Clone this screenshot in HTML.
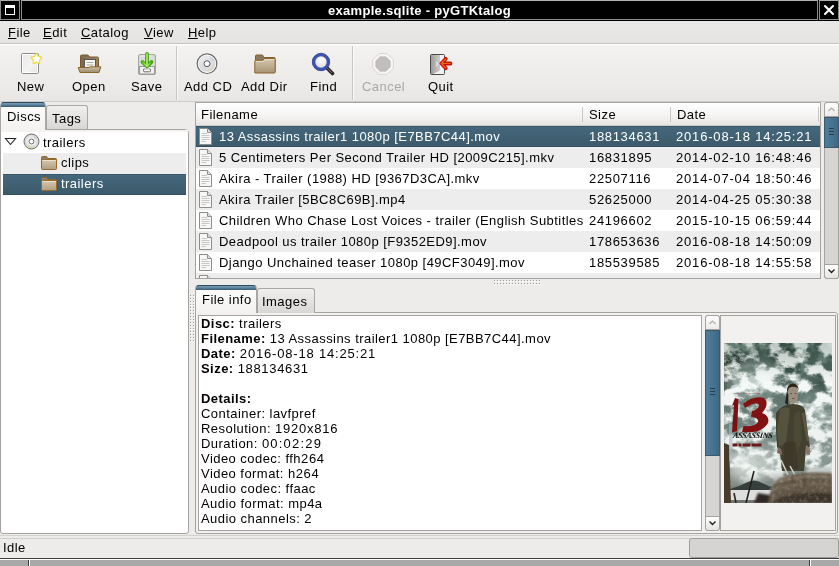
<!DOCTYPE html>
<html><head><meta charset="utf-8">
<style>
*{box-sizing:border-box;margin:0;padding:0}
html,body{width:839px;height:566px;overflow:hidden;background:#edeceb;font-family:"Liberation Sans",sans-serif;font-size:13px;color:#000}
.a{position:absolute}
.t{position:absolute;will-change:transform;white-space:pre;line-height:15px;font-size:13px;letter-spacing:0.45px}
u{text-decoration:underline;text-decoration-thickness:1px;text-underline-offset:0.5px;text-decoration-skip-ink:none}
</style></head><body>
<!-- title bar -->
<div class="a" style="left:0;top:0;width:839px;height:21px;background:#000"></div>
<div class="a" style="left:0;top:0;width:20px;height:20px;border:1px solid #8a8a8a;border-top-color:#b0b0b0;background:#000"></div>
<div class="a" style="left:5px;top:5px;width:10px;height:10px;border:1px solid #fff;border-top-width:3px"></div>
<div class="a" style="left:21px;top:0;width:797px;height:20px;border:1px solid #8a8a8a;border-top-color:#b0b0b0;background:#000"></div>
<div class="a" style="left:819px;top:0;width:20px;height:20px;border:1px solid #8a8a8a;border-top-color:#b0b0b0;background:#000"></div>
<svg class="a" style="left:823px;top:4px" width="12" height="12"><path d="M2 2L10 10M10 2L2 10" stroke="#fff" stroke-width="2.1" stroke-linecap="round"/></svg>
<div class="t" style="left:328px;top:3px;color:#fff;font-weight:bold;font-size:13px;letter-spacing:0.3px">example.sqlite - pyGTKtalog</div>

<!-- menubar -->
<div class="a" style="left:0;top:21px;width:839px;height:23px;background:linear-gradient(#e9e8e6,#e5e4e2);border-bottom:1px solid #c6c4c1"></div>
<div class="t" style="left:8px;top:25px"><u>F</u>ile</div>
<div class="t" style="left:43px;top:25px"><u>E</u>dit</div>
<div class="t" style="left:81px;top:25px"><u>C</u>atalog</div>
<div class="t" style="left:144px;top:25px"><u>V</u>iew</div>
<div class="t" style="left:188px;top:25px"><u>H</u>elp</div>

<!-- toolbar -->
<div class="a" style="left:0;top:44px;width:839px;height:58px;background:linear-gradient(#fdfdfd 0px,#fdfdfd 1px,#f3f2f1 2px,#e8e7e5);border-bottom:1px solid #cdcbc8"></div>
<div class="a" style="left:176px;top:46px;width:1px;height:54px;background:#c8c6c3;box-shadow:1px 0 0 #fafafa"></div>
<div class="a" style="left:352px;top:46px;width:1px;height:54px;background:#c8c6c3;box-shadow:1px 0 0 #fafafa"></div>
<div class="t" style="left:17px;top:79px">New</div>
<div class="t" style="left:72px;top:79px">Open</div>
<div class="t" style="left:131px;top:79px">Save</div>
<div class="t" style="left:184px;top:79px">Add CD</div>
<div class="t" style="left:241px;top:79px">Add Dir</div>
<div class="t" style="left:310px;top:79px">Find</div>
<div class="t" style="left:362px;top:79px;color:#a9a8a6">Cancel</div>
<div class="t" style="left:428px;top:79px">Quit</div>

<!-- toolbar icons -->
<svg class="a" style="left:18px;top:51px" width="24" height="24">
<defs><linearGradient id="pg" x1="0" y1="0" x2="1" y2="1"><stop offset="0" stop-color="#e8e8e6"/><stop offset="0.6" stop-color="#f4f4f3"/><stop offset="1" stop-color="#e2e2e0"/></linearGradient></defs>
<rect x="3.5" y="2.5" width="17" height="20" rx="1.2" fill="url(#pg)" stroke="#8d8d8b"/>
<rect x="4.5" y="3.5" width="15" height="18" fill="none" stroke="#fff" stroke-width="0.8"/>
<path d="M18.4 3.0L20.0 5.7L23.2 6.5L21.1 8.9L21.3 12.0L18.4 10.8L15.5 12.0L15.7 8.9L13.6 6.5L16.8 5.7Z" fill="#fffef0" stroke="#e8d420" stroke-width="2" stroke-linejoin="round"/><path d="M18.4 3.0L20.0 5.7L23.2 6.5L21.1 8.9L21.3 12.0L18.4 10.8L15.5 12.0L15.7 8.9L13.6 6.5L16.8 5.7Z" fill="#fff" stroke="#f4e860" stroke-width="0.6" stroke-linejoin="round"/>
</svg>
<svg class="a" style="left:77px;top:50px" width="25" height="25">
<defs><linearGradient id="ob" x1="0" y1="0" x2="1" y2="0"><stop offset="0" stop-color="#7a664c"/><stop offset="1" stop-color="#9c8766"/></linearGradient>
<linearGradient id="of" x1="0" y1="0" x2="0" y2="1"><stop offset="0" stop-color="#cfc2a8"/><stop offset="1" stop-color="#9d8a6a"/></linearGradient></defs>
<path d="M3.5 22.5V6.2Q3.5 5 4.7 5H11L12.5 7H20.3Q21.5 7 21.5 8.2V22.5Z" fill="url(#ob)" stroke="#7a5a2c"/>
<rect x="7.5" y="9.5" width="11" height="8" fill="#f8f8f6" stroke="#555"/>
<path d="M9.5 12.5H16.5M9.5 15H16.5" stroke="#a8a8a0" stroke-width="1.1"/>
<path d="M1.2 17.5H12L13 16.8H23.8L22 22.5H3Z" fill="url(#of)" stroke="#8a6428" stroke-linejoin="round"/>
</svg>
<svg class="a" style="left:135px;top:51px" width="24" height="24">
<defs><linearGradient id="cab" x1="0" y1="0" x2="1" y2="0"><stop offset="0" stop-color="#d8d8d6"/><stop offset="0.5" stop-color="#f2f2f1"/><stop offset="1" stop-color="#cfcfcd"/></linearGradient>
<linearGradient id="grn" x1="0" y1="0" x2="1" y2="0"><stop offset="0" stop-color="#5fc21f"/><stop offset="0.5" stop-color="#a8ee6a"/><stop offset="1" stop-color="#4caa14"/></linearGradient></defs>
<rect x="3.5" y="3.5" width="17" height="20" rx="1.5" fill="url(#cab)" stroke="#a4a4a2"/>
<rect x="5" y="6" width="14" height="8" fill="#dcdcda"/>
<rect x="4.5" y="15.5" width="15" height="7.5" fill="#f0f0ee" stroke="#9a9a98"/>
<rect x="8.5" y="17.8" width="7" height="3" rx="1" fill="#fafafa" stroke="#5a5a5a" stroke-width="0.9"/><path d="M9.5 17.8H14.5" stroke="#e0e0de" stroke-width="1"/>
<path d="M12 3V14M7.5 11L12 15.3L16.5 11" fill="none" stroke="#45a012" stroke-width="3.8" stroke-linecap="round" stroke-linejoin="round"/>
<path d="M12 3V14M7.5 11L12 15.3L16.5 11" fill="none" stroke="url(#grn)" stroke-width="1.8" stroke-linecap="round" stroke-linejoin="round"/>
</svg>
<svg class="a" style="left:195px;top:52px" width="24" height="24">
<defs><radialGradient id="cd24" cx="0.45" cy="0.4" r="0.6"><stop offset="0" stop-color="#fff"/><stop offset="0.5" stop-color="#e2e2e4"/><stop offset="0.8" stop-color="#d4d4dc"/><stop offset="1" stop-color="#eee"/></radialGradient></defs>
<circle cx="12" cy="11.7" r="9.8" fill="url(#cd24)" stroke="#6a6a6a" stroke-width="1.2"/>
<circle cx="12" cy="11.7" r="8.6" fill="none" stroke="#fafafa" stroke-width="1"/><path d="M13 18.5A7 7 0 0 0 18.8 13" stroke="#d8dca0" stroke-width="2.5" fill="none" opacity="0.4"/><path d="M18.5 9A7 7 0 0 0 15 5.5" stroke="#b8b8e8" stroke-width="2.5" fill="none" opacity="0.35"/><circle cx="12" cy="11.7" r="5" fill="none" stroke="#dcdce0" stroke-width="1.5"/>
<circle cx="12" cy="11.7" r="3" fill="#f4f4f4" stroke="#555" stroke-width="1"/>
<circle cx="12" cy="11.7" r="1.5" fill="#fff"/>
</svg>
<svg class="a" style="left:253px;top:52px" width="24" height="24">
<defs><linearGradient id="df" x1="0" y1="0" x2="0" y2="1"><stop offset="0" stop-color="#d3c6ad"/><stop offset="1" stop-color="#a89474"/></linearGradient></defs>
<path d="M2.5 20V4Q2.5 3 3.5 3H9.5L11 5.5H21Q22 5.5 22 6.5V20Z" fill="#8d7a5e" stroke="#84602a"/>
<path d="M1.8 20.5V9.2Q1.8 8.3 2.8 8.3H10L11.5 6.5H21.2Q22.2 6.5 22.2 7.5V20.2Q22.2 21 21.2 21H2.8Q1.8 21 1.8 20Z" fill="url(#df)" stroke="#8a6428"/>
<path d="M3 9.5H10.5L12 7.6H21" stroke="#eee4d0" stroke-width="0.9" fill="none"/>
</svg>
<svg class="a" style="left:310px;top:51px" width="25" height="25">
<defs><radialGradient id="lens" cx="0.55" cy="0.35" r="0.6"><stop offset="0" stop-color="#fff"/><stop offset="1" stop-color="#dcdcdc"/></radialGradient></defs>
<path d="M17 17L22.5 22.5" stroke="#2a2a2a" stroke-width="3.6" stroke-linecap="round"/>
<path d="M17.5 17.5L21.5 21.5" stroke="#777" stroke-width="1" stroke-linecap="round"/>
<circle cx="11" cy="11" r="7.2" fill="url(#lens)" stroke="#3d55b0" stroke-width="3"/>
<circle cx="11" cy="11" r="8.7" fill="none" stroke="#2a3a8a" stroke-width="0.8"/>
</svg>
<svg class="a" style="left:371px;top:52px" width="24" height="24">
<path d="M8 1.6H16L22.4 8V16L16 22.4H8L1.6 16V8Z" fill="#f6f6f5" stroke="#d8d6d4" stroke-width="1"/>
<path d="M9 4.8H15L19.2 9V15L15 19.2H9L4.8 15V9Z" fill="#c1bdbc" stroke="#b3afae" stroke-width="0.6"/>
</svg>
<svg class="a" style="left:428px;top:52px" width="25" height="24">
<defs><linearGradient id="door" x1="0" y1="0" x2="1" y2="0"><stop offset="0" stop-color="#9a9a9a"/><stop offset="0.6" stop-color="#c8c8c8"/><stop offset="1" stop-color="#d8d8d8"/></linearGradient></defs>
<rect x="2.5" y="2.5" width="14" height="20" rx="1" fill="url(#door)" stroke="#4a4a4a"/>
<path d="M12 3H16V22H5L12 18.5Z" fill="#f2f2f2"/>
<path d="M8 10L10 12L8 14" stroke="#e8e8e8" stroke-width="1.2" fill="none"/>
<path d="M13.5 11.5H22.5M17.8 6.8L13.3 11.5L17.8 16.2" fill="none" stroke="#cc1000" stroke-width="3.8" stroke-linecap="round" stroke-linejoin="round"/>
<path d="M13.5 11.5H22.3M17.8 6.8L13.3 11.5L17.8 16.2" fill="none" stroke="#f26a18" stroke-width="1.2" stroke-linecap="round" stroke-linejoin="round"/>
</svg>
<!-- left notebook -->
<div class="a" style="left:0;top:129px;width:189px;height:405px;border:1px solid #a5a3a0;border-radius:0 4px 3px 3px;background:#fff;box-shadow:inset 1px 0 0 #fff"></div>
<div class="a" style="left:1px;top:130px;width:187px;height:2px;background:#f4f3f2"></div>
<div class="a" style="left:46px;top:105px;width:42px;height:24px;border:1px solid #a9a7a4;border-bottom:none;border-radius:3px 3px 0 0;background:linear-gradient(#f0efee,#d9d7d5)"></div>
<div class="a" style="left:0;top:102px;width:46px;height:28px;border:1px solid #a9a7a4;border-bottom:none;border-top-color:#31495a;border-radius:4px 4px 0 0;background:linear-gradient(#7aa0b8 0px,#5a819b 2px,#466b84 3px,#3a5a6d 4px,#fbfbfa 4px,#f3f2f1 100%)"></div>
<div class="t" style="left:7px;top:109px">Discs</div>
<div class="t" style="left:52px;top:111px">Tags</div>

<!-- list -->
<div class="a" style="left:195px;top:102px;width:626px;height:177px;border:1px solid #a5a3a0;background:#fff"></div>

<!-- notebook bottom -->
<div class="a" style="left:195px;top:312px;width:643px;height:222px;border:1px solid #a5a3a0;border-radius:0 3px 3px 3px;background:#f2f1f0"></div>
<div class="a" style="left:257px;top:288px;width:58px;height:25px;border:1px solid #a9a7a4;border-bottom:none;border-radius:3px 3px 0 0;background:linear-gradient(#f0efee,#d9d7d5)"></div>
<div class="a" style="left:195px;top:285px;width:62px;height:28px;border:1px solid #a9a7a4;border-bottom:none;border-top-color:#31495a;border-radius:4px 4px 0 0;background:linear-gradient(#7aa0b8 0px,#5a819b 2px,#466b84 3px,#3a5a6d 4px,#fbfbfa 4px,#f3f2f1 100%)"></div>
<div class="t" style="left:202px;top:292px">File info</div>
<div class="t" style="left:262px;top:294px">Images</div>

<svg width="0" height="0" style="position:absolute"><defs>
<g id="fileic"><path d="M0.5 0.5H8.5L12.5 4.5V16.5H0.5Z" fill="#f7f7f6" stroke="#8e8d8b"/><path d="M8.5 0.5V4.5H12.5" fill="#dedddb" stroke="#8e8d8b"/>
<path d="M2.5 5.5H8M2.5 7.5H10.5M2.5 9.5H10.5M2.5 11.5H10.5M2.5 13.5H7" stroke="#c8c7c5" stroke-width="1"/></g>
</defs></svg>
<svg width="0" height="0" style="position:absolute"><defs>
<radialGradient id="cdg" cx="0.5" cy="0.5" r="0.5"><stop offset="0.2" stop-color="#fff"/><stop offset="0.6" stop-color="#e6e6e6"/><stop offset="1" stop-color="#d2d2d2"/></radialGradient>
<linearGradient id="foldg" x1="0" y1="0" x2="0" y2="1"><stop offset="0" stop-color="#d6c8ae"/><stop offset="1" stop-color="#b29e80"/></linearGradient>
<g id="cdic16"><circle cx="8.5" cy="8.5" r="7.5" fill="url(#cdg)" stroke="#6e6e6e" stroke-width="1"/><path d="M5 12.5A5.5 5.5 0 0 0 11 13.8" stroke="#c8d890" stroke-width="2" fill="none" opacity="0.6"/><path d="M12.5 6A5 5 0 0 0 11 4" stroke="#b8b8e0" stroke-width="1.5" fill="none" opacity="0.5"/><circle cx="8.5" cy="8.5" r="2.4" fill="#fff" stroke="#707070" stroke-width="1"/></g>
<g id="foldic16"><path d="M0.5 13V2.5Q0.5 1.5 1.5 1.5H5.5L7 3.5H14.5Q15.5 3.5 15.5 4.5V13Z" fill="#8e7e6a" stroke="#8f6428"/><path d="M0.5 13.5V5.5Q0.5 4.5 1.5 4.5H14.5Q15.5 4.5 15.5 5.5V13.5Q15.5 14.5 14.5 14.5H1.5Q0.5 14.5 0.5 13.5Z" fill="url(#foldg)" stroke="#946a2e"/><path d="M1.5 5.5H14.5" stroke="#ece2cc" stroke-width="1"/></g>
</defs></svg>
<!-- tree -->
<div class="a" style="left:3px;top:153px;width:183px;height:21px;background:#ededed"></div>
<div class="a" style="left:3px;top:174px;width:183px;height:21px;background:linear-gradient(#37586a 0px,#37586a 1px,#45677b 1px,#3c5b6c 20px,#34505f 20px)"></div>
<svg class="a" style="left:4px;top:137px" width="13" height="9"><path d="M1.5 1.5H11.5L6.5 7.5Z" fill="none" stroke="#222" stroke-width="1.1" stroke-linejoin="miter"/></svg>
<svg class="a" style="left:23px;top:133px" width="17" height="17"><use href="#cdic16"/></svg>
<div class="t" style="left:43px;top:135px">trailers</div>
<svg class="a" style="left:41px;top:155px" width="17" height="17"><use href="#foldic16"/></svg>
<div class="t" style="left:61px;top:155px">clips</div>
<svg class="a" style="left:41px;top:176px" width="17" height="17"><use href="#foldic16"/></svg>
<div class="t" style="left:61px;top:176px;color:#fff">trailers</div>
<!-- list content -->
<div class="a" style="left:196px;top:103px;width:624px;height:175px;overflow:hidden">
<div class="a" style="left:0;top:0;width:624px;height:23px;background:linear-gradient(#ffffff,#f4f3f2 60%,#e6e5e3);border-bottom:1px solid #d0cecb"></div>
<div class="a" style="left:386px;top:4px;width:1px;height:15px;background:#c9c7c4"></div>
<div class="a" style="left:474px;top:4px;width:1px;height:15px;background:#c9c7c4"></div>
<div class="a" style="left:622px;top:4px;width:1px;height:15px;background:#c9c7c4"></div>
<div class="t" style="left:5px;top:4px">Filename</div>
<div class="t" style="left:393px;top:4px">Size</div>
<div class="t" style="left:481px;top:4px">Date</div>
<div class="a" style="left:0;top:23px;width:624px;height:21px;background:linear-gradient(#37586a 0px,#37586a 1px,#45677b 1px,#3c5b6c 20px,#34505f 20px);color:#fff">
<svg class="a" style="left:3px;top:2px" width="13" height="17"><use href="#fileic"/></svg>
<div class="t" style="left:23px;top:3px;width:364px;overflow:hidden">13 Assassins trailer1 1080p [E7BB7C44].mov</div>
<div class="t" style="left:393px;top:3px;letter-spacing:0.67px">188134631</div>
<div class="t" style="left:480px;top:3px;letter-spacing:0.82px">2016-08-18 14:25:21</div>
</div>
<div class="a" style="left:0;top:44px;width:624px;height:21px;background:#ededed;color:#000">
<svg class="a" style="left:3px;top:2px" width="13" height="17"><use href="#fileic"/></svg>
<div class="t" style="left:23px;top:3px;width:364px;overflow:hidden">5 Centimeters Per Second Trailer HD [2009C215].mkv</div>
<div class="t" style="left:393px;top:3px;letter-spacing:0.67px">16831895</div>
<div class="t" style="left:480px;top:3px;letter-spacing:0.82px">2014-02-10 16:48:46</div>
</div>
<div class="a" style="left:0;top:65px;width:624px;height:21px;background:#fff;color:#000">
<svg class="a" style="left:3px;top:2px" width="13" height="17"><use href="#fileic"/></svg>
<div class="t" style="left:23px;top:3px;width:364px;overflow:hidden">Akira - Trailer (1988) HD [9367D3CA].mkv</div>
<div class="t" style="left:393px;top:3px;letter-spacing:0.67px">22507116</div>
<div class="t" style="left:480px;top:3px;letter-spacing:0.82px">2014-07-04 18:50:46</div>
</div>
<div class="a" style="left:0;top:86px;width:624px;height:21px;background:#ededed;color:#000">
<svg class="a" style="left:3px;top:2px" width="13" height="17"><use href="#fileic"/></svg>
<div class="t" style="left:23px;top:3px;width:364px;overflow:hidden">Akira Trailer [5BC8C69B].mp4</div>
<div class="t" style="left:393px;top:3px;letter-spacing:0.67px">52625000</div>
<div class="t" style="left:480px;top:3px;letter-spacing:0.82px">2014-04-25 05:30:38</div>
</div>
<div class="a" style="left:0;top:107px;width:624px;height:21px;background:#fff;color:#000">
<svg class="a" style="left:3px;top:2px" width="13" height="17"><use href="#fileic"/></svg>
<div class="t" style="left:23px;top:3px;width:364px;overflow:hidden">Children Who Chase Lost Voices - trailer (English Subtitles)</div>
<div class="t" style="left:393px;top:3px;letter-spacing:0.67px">24196602</div>
<div class="t" style="left:480px;top:3px;letter-spacing:0.82px">2015-10-15 06:59:44</div>
</div>
<div class="a" style="left:0;top:128px;width:624px;height:21px;background:#ededed;color:#000">
<svg class="a" style="left:3px;top:2px" width="13" height="17"><use href="#fileic"/></svg>
<div class="t" style="left:23px;top:3px;width:364px;overflow:hidden">Deadpool us trailer 1080p [F9352ED9].mov</div>
<div class="t" style="left:393px;top:3px;letter-spacing:0.67px">178653636</div>
<div class="t" style="left:480px;top:3px;letter-spacing:0.82px">2016-08-18 14:50:09</div>
</div>
<div class="a" style="left:0;top:149px;width:624px;height:21px;background:#fff;color:#000">
<svg class="a" style="left:3px;top:2px" width="13" height="17"><use href="#fileic"/></svg>
<div class="t" style="left:23px;top:3px;width:364px;overflow:hidden">Django Unchained teaser 1080p [49CF3049].mov</div>
<div class="t" style="left:393px;top:3px;letter-spacing:0.67px">185539585</div>
<div class="t" style="left:480px;top:3px;letter-spacing:0.82px">2016-08-18 14:55:58</div>
</div>
<div class="a" style="left:0;top:170px;width:624px;height:21px;background:#ededed;color:#000">
<svg class="a" style="left:3px;top:2px" width="13" height="17"><use href="#fileic"/></svg>
<div class="t" style="left:23px;top:3px;width:364px;overflow:hidden">Dredd trailer</div>
<div class="t" style="left:393px;top:3px;letter-spacing:0.67px">1000</div>
<div class="t" style="left:480px;top:3px;letter-spacing:0.82px">2016-08-18 14:55:58</div>
</div>
</div>
<!-- list scrollbar -->
<div class="a" style="left:824px;top:102px;width:15px;height:177px;background:#d6d5d4;border:1px solid #a5a3a0;border-radius:3px"></div>
<div class="a" style="left:824px;top:102px;width:15px;height:15px;background:linear-gradient(#fdfdfd,#ecebea);border:1px solid #a5a3a0;border-radius:3px 3px 0 0"></div>
<svg class="a" style="left:827px;top:105px" width="9" height="8"><path d="M1.5 6L4.5 3L7.5 6" fill="none" stroke="#adabaa" stroke-width="1.1"/></svg>
<div class="a" style="left:824px;top:117px;width:15px;height:31px;background:linear-gradient(90deg,#4e7c9a,#45728f 60%,#3e6884);border:1px solid #3a596c"></div>
<div class="a" style="left:829px;top:128px;width:5px;height:1px;background:#2a3e4c;box-shadow:0 3px 0 #2a3e4c,0 6px 0 #2a3e4c"></div>
<div class="a" style="left:824px;top:264px;width:15px;height:15px;background:linear-gradient(#fdfdfd,#e6e5e4);border:1px solid #a5a3a0;border-radius:0 0 3px 3px"></div>
<svg class="a" style="left:827px;top:267px" width="9" height="8"><path d="M1.5 2.5L4.5 5.5L7.5 2.5" fill="none" stroke="#222" stroke-width="1.4"/></svg>
<!-- paned handle -->
<svg class="a" style="left:190px;top:295px" width="6" height="48"><rect x="0" y="0" width="1" height="1" fill="#9e9c99"/><rect x="1" y="1" width="1" height="1" fill="#fff"/><rect x="3" y="0" width="1" height="1" fill="#9e9c99"/><rect x="4" y="1" width="1" height="1" fill="#fff"/><rect x="0" y="3" width="1" height="1" fill="#9e9c99"/><rect x="1" y="4" width="1" height="1" fill="#fff"/><rect x="3" y="3" width="1" height="1" fill="#9e9c99"/><rect x="4" y="4" width="1" height="1" fill="#fff"/><rect x="0" y="6" width="1" height="1" fill="#9e9c99"/><rect x="1" y="7" width="1" height="1" fill="#fff"/><rect x="3" y="6" width="1" height="1" fill="#9e9c99"/><rect x="4" y="7" width="1" height="1" fill="#fff"/><rect x="0" y="9" width="1" height="1" fill="#9e9c99"/><rect x="1" y="10" width="1" height="1" fill="#fff"/><rect x="3" y="9" width="1" height="1" fill="#9e9c99"/><rect x="4" y="10" width="1" height="1" fill="#fff"/><rect x="0" y="12" width="1" height="1" fill="#9e9c99"/><rect x="1" y="13" width="1" height="1" fill="#fff"/><rect x="3" y="12" width="1" height="1" fill="#9e9c99"/><rect x="4" y="13" width="1" height="1" fill="#fff"/><rect x="0" y="15" width="1" height="1" fill="#9e9c99"/><rect x="1" y="16" width="1" height="1" fill="#fff"/><rect x="3" y="15" width="1" height="1" fill="#9e9c99"/><rect x="4" y="16" width="1" height="1" fill="#fff"/><rect x="0" y="18" width="1" height="1" fill="#9e9c99"/><rect x="1" y="19" width="1" height="1" fill="#fff"/><rect x="3" y="18" width="1" height="1" fill="#9e9c99"/><rect x="4" y="19" width="1" height="1" fill="#fff"/><rect x="0" y="21" width="1" height="1" fill="#9e9c99"/><rect x="1" y="22" width="1" height="1" fill="#fff"/><rect x="3" y="21" width="1" height="1" fill="#9e9c99"/><rect x="4" y="22" width="1" height="1" fill="#fff"/><rect x="0" y="24" width="1" height="1" fill="#9e9c99"/><rect x="1" y="25" width="1" height="1" fill="#fff"/><rect x="3" y="24" width="1" height="1" fill="#9e9c99"/><rect x="4" y="25" width="1" height="1" fill="#fff"/><rect x="0" y="27" width="1" height="1" fill="#9e9c99"/><rect x="1" y="28" width="1" height="1" fill="#fff"/><rect x="3" y="27" width="1" height="1" fill="#9e9c99"/><rect x="4" y="28" width="1" height="1" fill="#fff"/><rect x="0" y="30" width="1" height="1" fill="#9e9c99"/><rect x="1" y="31" width="1" height="1" fill="#fff"/><rect x="3" y="30" width="1" height="1" fill="#9e9c99"/><rect x="4" y="31" width="1" height="1" fill="#fff"/><rect x="0" y="33" width="1" height="1" fill="#9e9c99"/><rect x="1" y="34" width="1" height="1" fill="#fff"/><rect x="3" y="33" width="1" height="1" fill="#9e9c99"/><rect x="4" y="34" width="1" height="1" fill="#fff"/><rect x="0" y="36" width="1" height="1" fill="#9e9c99"/><rect x="1" y="37" width="1" height="1" fill="#fff"/><rect x="3" y="36" width="1" height="1" fill="#9e9c99"/><rect x="4" y="37" width="1" height="1" fill="#fff"/><rect x="0" y="39" width="1" height="1" fill="#9e9c99"/><rect x="1" y="40" width="1" height="1" fill="#fff"/><rect x="3" y="39" width="1" height="1" fill="#9e9c99"/><rect x="4" y="40" width="1" height="1" fill="#fff"/><rect x="0" y="42" width="1" height="1" fill="#9e9c99"/><rect x="1" y="43" width="1" height="1" fill="#fff"/><rect x="3" y="42" width="1" height="1" fill="#9e9c99"/><rect x="4" y="43" width="1" height="1" fill="#fff"/><rect x="0" y="45" width="1" height="1" fill="#9e9c99"/><rect x="1" y="46" width="1" height="1" fill="#fff"/><rect x="3" y="45" width="1" height="1" fill="#9e9c99"/><rect x="4" y="46" width="1" height="1" fill="#fff"/></svg>
<svg class="a" style="left:494px;top:280px" width="48" height="6"><rect x="0" y="0" width="1" height="1" fill="#9e9c99"/><rect x="1" y="1" width="1" height="1" fill="#fff"/><rect x="3" y="0" width="1" height="1" fill="#9e9c99"/><rect x="4" y="1" width="1" height="1" fill="#fff"/><rect x="6" y="0" width="1" height="1" fill="#9e9c99"/><rect x="7" y="1" width="1" height="1" fill="#fff"/><rect x="9" y="0" width="1" height="1" fill="#9e9c99"/><rect x="10" y="1" width="1" height="1" fill="#fff"/><rect x="12" y="0" width="1" height="1" fill="#9e9c99"/><rect x="13" y="1" width="1" height="1" fill="#fff"/><rect x="15" y="0" width="1" height="1" fill="#9e9c99"/><rect x="16" y="1" width="1" height="1" fill="#fff"/><rect x="18" y="0" width="1" height="1" fill="#9e9c99"/><rect x="19" y="1" width="1" height="1" fill="#fff"/><rect x="21" y="0" width="1" height="1" fill="#9e9c99"/><rect x="22" y="1" width="1" height="1" fill="#fff"/><rect x="24" y="0" width="1" height="1" fill="#9e9c99"/><rect x="25" y="1" width="1" height="1" fill="#fff"/><rect x="27" y="0" width="1" height="1" fill="#9e9c99"/><rect x="28" y="1" width="1" height="1" fill="#fff"/><rect x="30" y="0" width="1" height="1" fill="#9e9c99"/><rect x="31" y="1" width="1" height="1" fill="#fff"/><rect x="33" y="0" width="1" height="1" fill="#9e9c99"/><rect x="34" y="1" width="1" height="1" fill="#fff"/><rect x="36" y="0" width="1" height="1" fill="#9e9c99"/><rect x="37" y="1" width="1" height="1" fill="#fff"/><rect x="39" y="0" width="1" height="1" fill="#9e9c99"/><rect x="40" y="1" width="1" height="1" fill="#fff"/><rect x="42" y="0" width="1" height="1" fill="#9e9c99"/><rect x="43" y="1" width="1" height="1" fill="#fff"/><rect x="45" y="0" width="1" height="1" fill="#9e9c99"/><rect x="46" y="1" width="1" height="1" fill="#fff"/><rect x="0" y="3" width="1" height="1" fill="#9e9c99"/><rect x="1" y="4" width="1" height="1" fill="#fff"/><rect x="3" y="3" width="1" height="1" fill="#9e9c99"/><rect x="4" y="4" width="1" height="1" fill="#fff"/><rect x="6" y="3" width="1" height="1" fill="#9e9c99"/><rect x="7" y="4" width="1" height="1" fill="#fff"/><rect x="9" y="3" width="1" height="1" fill="#9e9c99"/><rect x="10" y="4" width="1" height="1" fill="#fff"/><rect x="12" y="3" width="1" height="1" fill="#9e9c99"/><rect x="13" y="4" width="1" height="1" fill="#fff"/><rect x="15" y="3" width="1" height="1" fill="#9e9c99"/><rect x="16" y="4" width="1" height="1" fill="#fff"/><rect x="18" y="3" width="1" height="1" fill="#9e9c99"/><rect x="19" y="4" width="1" height="1" fill="#fff"/><rect x="21" y="3" width="1" height="1" fill="#9e9c99"/><rect x="22" y="4" width="1" height="1" fill="#fff"/><rect x="24" y="3" width="1" height="1" fill="#9e9c99"/><rect x="25" y="4" width="1" height="1" fill="#fff"/><rect x="27" y="3" width="1" height="1" fill="#9e9c99"/><rect x="28" y="4" width="1" height="1" fill="#fff"/><rect x="30" y="3" width="1" height="1" fill="#9e9c99"/><rect x="31" y="4" width="1" height="1" fill="#fff"/><rect x="33" y="3" width="1" height="1" fill="#9e9c99"/><rect x="34" y="4" width="1" height="1" fill="#fff"/><rect x="36" y="3" width="1" height="1" fill="#9e9c99"/><rect x="37" y="4" width="1" height="1" fill="#fff"/><rect x="39" y="3" width="1" height="1" fill="#9e9c99"/><rect x="40" y="4" width="1" height="1" fill="#fff"/><rect x="42" y="3" width="1" height="1" fill="#9e9c99"/><rect x="43" y="4" width="1" height="1" fill="#fff"/><rect x="45" y="3" width="1" height="1" fill="#9e9c99"/><rect x="46" y="4" width="1" height="1" fill="#fff"/></svg>

<!-- text view -->
<div class="a" style="left:198px;top:315px;width:504px;height:216px;border:1px solid #a5a3a0;background:#fff"></div>
<div class="t" style="left:201px;top:316px"><b>Disc:</b> trailers</div>
<div class="t" style="left:201px;top:331px"><b>Filename:</b> 13 Assassins trailer1 1080p [E7BB7C44].mov</div>
<div class="t" style="left:201px;top:346px"><b>Date:</b> <span style="letter-spacing:0.82px">2016-08-18 14:25:21</span></div>
<div class="t" style="left:201px;top:361px"><b>Size:</b> <span style="letter-spacing:0.67px">188134631</span></div>
<div class="t" style="left:201px;top:391px"><b>Details:</b></div>
<div class="t" style="left:201px;top:406px">Container: lavfpref</div>
<div class="t" style="left:201px;top:421px">Resolution: <span style="letter-spacing:0.75px">1920x816</span></div>
<div class="t" style="left:201px;top:436px">Duration: <span style="letter-spacing:1.2px">00:02:29</span></div>
<div class="t" style="left:201px;top:451px">Video codec: ffh<span style="letter-spacing:0.7px">264</span></div>
<div class="t" style="left:201px;top:466px">Video format: h<span style="letter-spacing:0.7px">264</span></div>
<div class="t" style="left:201px;top:481px">Audio codec: ffaac</div>
<div class="t" style="left:201px;top:496px">Audio format: mp4a</div>
<div class="t" style="left:201px;top:511px">Audio channels: 2</div>
<!-- text scrollbar -->
<div class="a" style="left:705px;top:315px;width:15px;height:216px;background:#d6d5d4;border:1px solid #a5a3a0;border-radius:3px"></div>
<div class="a" style="left:705px;top:315px;width:15px;height:15px;background:linear-gradient(#fdfdfd,#ecebea);border:1px solid #a5a3a0;border-radius:3px 3px 0 0"></div>
<svg class="a" style="left:708px;top:318px" width="9" height="8"><path d="M1.5 6L4.5 3L7.5 6" fill="none" stroke="#adabaa" stroke-width="1.1"/></svg>
<div class="a" style="left:705px;top:330px;width:15px;height:126px;background:linear-gradient(90deg,#4e7c9a,#45728f 60%,#3e6884);border:1px solid #3a596c"></div>
<div class="a" style="left:710px;top:388px;width:5px;height:1px;background:#2a3e4c;box-shadow:0 3px 0 #2a3e4c,0 6px 0 #2a3e4c"></div>
<div class="a" style="left:705px;top:516px;width:15px;height:15px;background:linear-gradient(#fdfdfd,#e6e5e4);border:1px solid #a5a3a0;border-radius:0 0 3px 3px"></div>
<svg class="a" style="left:708px;top:519px" width="9" height="8"><path d="M1.5 2.5L4.5 5.5L7.5 2.5" fill="none" stroke="#222" stroke-width="1.4"/></svg>
<!-- image frame -->
<div class="a" style="left:720px;top:315px;width:116px;height:216px;border:1px solid #a5a3a0;background:#f2f1f0"></div>
<!--POSTER-->
<svg class="a" style="left:724px;top:343px" width="108" height="160" viewBox="0 0 108 160">
<defs>
<filter id="cloud" x="0" y="0" width="108" height="160" filterUnits="userSpaceOnUse"><feTurbulence type="fractalNoise" baseFrequency="0.06 0.08" numOctaves="5" seed="21"/><feColorMatrix type="matrix" values="0 0 0 0 0.9  0 0 0 0 0.94  0 0 0 0 0.92  5.5 0 0 0 -2.3"/><feGaussianBlur stdDeviation="0.35"/><feComposite in2="SourceGraphic" operator="in"/></filter>
<filter id="cloudd" x="0" y="0" width="108" height="160" filterUnits="userSpaceOnUse"><feTurbulence type="fractalNoise" baseFrequency="0.07 0.09" numOctaves="4" seed="5"/><feColorMatrix type="matrix" values="0 0 0 0 0.13  0 0 0 0 0.2  0 0 0 0 0.17  5 0 0 0 -2.4"/><feGaussianBlur stdDeviation="0.6"/><feComposite in2="SourceGraphic" operator="in"/></filter>
<filter id="bl1" x="-20%" y="-20%" width="140%" height="140%"><feGaussianBlur stdDeviation="1.1"/></filter>
<filter id="bl05" x="-20%" y="-20%" width="140%" height="140%"><feGaussianBlur stdDeviation="0.45"/></filter>
<filter id="bl2" x="-50%" y="-50%" width="200%" height="200%"><feGaussianBlur stdDeviation="6"/></filter>
<filter id="tex" x="0" y="0" width="108" height="160" filterUnits="userSpaceOnUse"><feTurbulence type="fractalNoise" baseFrequency="0.25" numOctaves="2" seed="9"/><feColorMatrix type="matrix" values="0 0 0 0 0.55  0 0 0 0 0.52  0 0 0 0 0.46  3 0 0 0 -1.4"/><feGaussianBlur stdDeviation="0.6"/><feComposite in2="SourceGraphic" operator="in"/></filter>
<linearGradient id="sky" x1="0" y1="0" x2="0" y2="1"><stop offset="0" stop-color="#3a5249"/><stop offset="0.3" stop-color="#5a706a"/><stop offset="0.7" stop-color="#8a9a96"/><stop offset="1" stop-color="#70746e"/></linearGradient>
<linearGradient id="cmask" x1="0" y1="0" x2="0" y2="1"><stop offset="0" stop-color="#fff" stop-opacity="0.7"/><stop offset="0.25" stop-color="#fff" stop-opacity="1"/><stop offset="0.8" stop-color="#fff" stop-opacity="0.9"/><stop offset="0.9" stop-color="#fff" stop-opacity="0"/></linearGradient>
<linearGradient id="cmaskd" x1="0" y1="0" x2="0" y2="1"><stop offset="0" stop-color="#fff" stop-opacity="1"/><stop offset="0.4" stop-color="#fff" stop-opacity="0.8"/><stop offset="0.7" stop-color="#fff" stop-opacity="0.2"/><stop offset="0.85" stop-color="#fff" stop-opacity="0"/></linearGradient>
<mask id="cmd"><rect width="108" height="160" fill="url(#cmaskd)"/></mask>
<mask id="cm"><rect width="108" height="160" fill="url(#cmask)"/></mask>
<clipPath id="pc"><rect width="108" height="160"/></clipPath>
</defs>
<g clip-path="url(#pc)">
<rect width="108" height="160" fill="url(#sky)"/>
<g filter="url(#bl2)">
<ellipse cx="4" cy="22" rx="16" ry="26" fill="#1e3229"/>
<ellipse cx="64" cy="16" rx="16" ry="14" fill="#2a4238"/>
<ellipse cx="100" cy="40" rx="8" ry="14" fill="#3a5048"/>
<ellipse cx="30" cy="38" rx="22" ry="14" fill="#c0ccc8"/>
<ellipse cx="92" cy="70" rx="14" ry="16" fill="#a8b8b2"/>
<ellipse cx="26" cy="122" rx="24" ry="16" fill="#c8d0cc"/>
<ellipse cx="96" cy="104" rx="14" ry="14" fill="#8a9894"/>
</g>
<rect width="108" height="130" filter="url(#cloudd)" mask="url(#cmd)"/>
<rect width="108" height="150" filter="url(#cloud)" mask="url(#cm)"/>
<!-- bottom left scenery -->
<g filter="url(#bl05)">
<path d="M6 146Q16 143 24 139Q30 136 36 139Q42 142 48 144V147H6Z" fill="#36403c"/>
<path d="M6 147H50V157H6Z" fill="#dcdfdd"/>
<path d="M0 100L5 102L7 160H0Z" fill="#4a3a2a"/>
<path d="M5 80L9 82L8 120L5 118Z" fill="#a8bcc4" opacity="0.6"/>
</g>
<path d="M82 127Q95 123 108 124V131H82Z" fill="#c4cac8" filter="url(#bl1)"/>
<!-- warrior -->
<g filter="url(#bl05)">
<path d="M52 70Q58 61 69 61Q79 61 81 67L84 92L86 104L82 106L80 128H58L56 110L53 104L52 88Z" fill="#43402e"/>
<path d="M56 66Q62 63 66 66L62 100L55 104L53 86Z" fill="#55523c"/>
<path d="M70 70L76 68L78 96L70 120Z" fill="#4c4a36" opacity="0.8"/>
<path d="M79 70L84 98" stroke="#5e5a44" stroke-width="2.4"/>
<path d="M60 100Q66 96 72 100L74 126H60Z" fill="#3a3628" opacity="0.7"/>
<path d="M82 102Q87 104 86 112L81 111Z" fill="#8a7868"/>
<path d="M54 104Q59 106 58 112L53 110Z" fill="#7a6858"/>
<path d="M64 46Q64 42 69 42Q74 42 74 47L73.5 56Q72 61 69 61Q66 61 64.5 56Z" fill="#9a8e7e"/>
<path d="M63 50Q62 41 69 40.5Q75 41 75 49L74 45Q69 42.5 65 45Z" fill="#2a2419"/>
<path d="M63 48L61 60L64 62L64.5 52Z" fill="#2a2419"/>
<path d="M66 50.5H68M70.5 50.5H72.5M68 55.5H70.5" stroke="#4a3e32" stroke-width="0.7"/>
<path d="M57 117L64 132M66 123L72 134" stroke="#d6d2c8" stroke-width="1.5"/>
</g>
<!-- foreground log -->
<g filter="url(#bl1)">
<path d="M44 160Q46 142 56 135Q78 128 108 130V160Z" fill="#625646"/>
<path d="M50 140Q75 131 106 134" stroke="#8a7c6a" stroke-width="2" fill="none"/>
<path d="M48 148Q72 138 106 142" stroke="#7a6e5e" stroke-width="1.5" fill="none"/>
<path d="M52 157Q72 147 108 150V160H48Z" fill="#3e352a"/>
<path d="M30 160L34 150L46 152L44 160Z" fill="#2e2820"/>
<path d="M68 134L72 160M80 132L82 158" stroke="#4a4034" stroke-width="1.4"/>
</g>
<rect x="44" y="130" width="64" height="30" filter="url(#tex)" opacity="0.25"/>
<path d="M30 128L22 160" stroke="#22201a" stroke-width="1.6"/>
<path d="M10 150L12 160" stroke="#2a241c" stroke-width="1.6"/>
<!-- 13 -->
<path d="M11 55L14.5 56L13 88L8 89.5L10 62L8 63Z" fill="#7a1010"/>
<path d="M19 61Q29 52 40 55Q46 61 38 70Q46 73 44 80Q38 91 18 89L19.5 83Q31 84 34 79Q35 75 27 73.5L28 68Q35 66 35 62Q32 58 21 65Z" fill="#821212"/>
<g fill="#101010" filter="url(#bl05)">
<text x="22" y="95" font-family="Liberation Serif" font-style="italic" font-weight="bold" font-size="8.2" letter-spacing="-0.4" transform="skewX(-8)">ASSASSINS</text>
</g>
<g fill="#6a1a1a" filter="url(#bl05)"><rect x="8.5" y="100.5" width="5" height="3"/><rect x="14.5" y="100.5" width="3" height="3"/><rect x="18.5" y="100.5" width="8" height="3"/><rect x="27.5" y="100.5" width="10" height="3"/></g>
<text x="7" y="50.5" font-family="Liberation Sans" font-size="2.4" fill="#8a2a2a">A FILM BY TAKASHI MIIKE</text>
</g>
</svg>
<!--/POSTER-->

<!-- status -->
<div class="a" style="left:0;top:535px;width:839px;height:1px;background:#d3d1ce"></div>
<div class="a" style="left:0;top:538px;width:839px;height:1px;background:#cfcdca"></div>
<div class="t" style="left:3px;top:540px">Idle</div>
<div class="a" style="left:689px;top:538px;width:150px;height:20px;border:1px solid #9f9d9a;border-radius:3px;background:#d5d4d3"></div>
<div class="a" style="left:0;top:558px;width:839px;height:8px;background:#a8a8a8;border-top:1px solid #3e3e3e;box-shadow:inset 0 1px 0 #fff"></div>
<div class="a" style="left:28px;top:560px;width:1px;height:6px;background:#3e3e3e;box-shadow:1px 0 0 #fff"></div>
<div class="a" style="left:809px;top:560px;width:1px;height:6px;background:#3e3e3e;box-shadow:1px 0 0 #fff"></div>
</body></html>
